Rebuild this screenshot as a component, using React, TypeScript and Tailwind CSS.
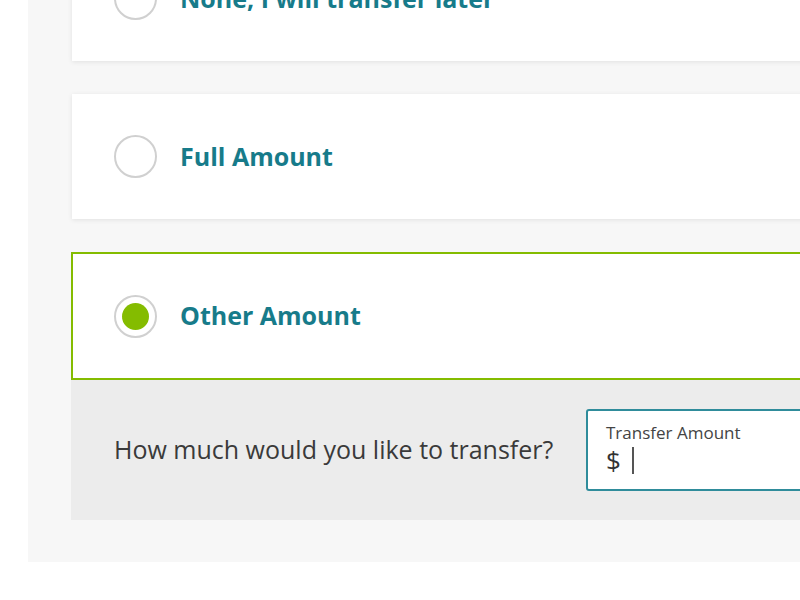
import { ReactNode } from "react";

function Radio({ checked }: { checked?: boolean }) {
  return (
    <span className="flex h-[43px] w-[43px] shrink-0 items-center justify-center rounded-full border-2 border-[#d0d0d0] bg-white">
      {checked && <span className="h-[27px] w-[27px] rounded-full bg-[#84bc00]" />}
    </span>
  );
}

function Option({ label, checked, children }: { label: string; checked?: boolean; children?: ReactNode }) {
  return (
    <div>
      <div
        className={
          checked
            ? "flex h-[128px] items-center gap-[23px] border-2 border-[#84bc00] bg-white pl-[41px]"
            : "flex h-[125px] items-center gap-[23px] bg-white pl-[42px] shadow-[0_1px_5px_rgba(0,0,0,0.09)]"
        }
      >
        <Radio checked={checked} />
        <span className="text-[25px] font-bold text-[#177b8a]">{label}</span>
      </div>
      {children}
    </div>
  );
}

export default function App() {
  return (
    <div className="h-[600px] w-[800px] overflow-hidden bg-white font-['Open_Sans',sans-serif]">
      <div className="ml-[28px] h-[562px] overflow-hidden bg-[#f7f7f7] pl-[43px]">
        <div className="-mt-[64px] flex w-[760px] flex-col gap-[33px]">
          <div className="ml-px">
            <Option label="None, I will transfer later" />
          </div>
          <div className="ml-px">
            <Option label="Full Amount" />
          </div>
          <Option label="Other Amount" checked>
            <div className="flex h-[140px] items-center bg-[#ececec] pl-[43px]">
              <span className="w-[472px] text-[25px] text-[#3a3a3a]">How much would you like to transfer?</span>
              <div className="flex h-[82px] flex-1 flex-col rounded-[3px] border-2 border-[#2f8c9b] bg-white pl-[18px] pt-[11px]">
                <span className="text-[17px] leading-[22px] text-[#444]">Transfer Amount</span>
                <span className="flex items-center gap-[11px] text-[26px] leading-[32px] text-[#333]">
                  $<span className="h-[27px] w-[2px] bg-[#555]" />
                </span>
              </div>
            </div>
          </Option>
        </div>
      </div>
    </div>
  );
}
